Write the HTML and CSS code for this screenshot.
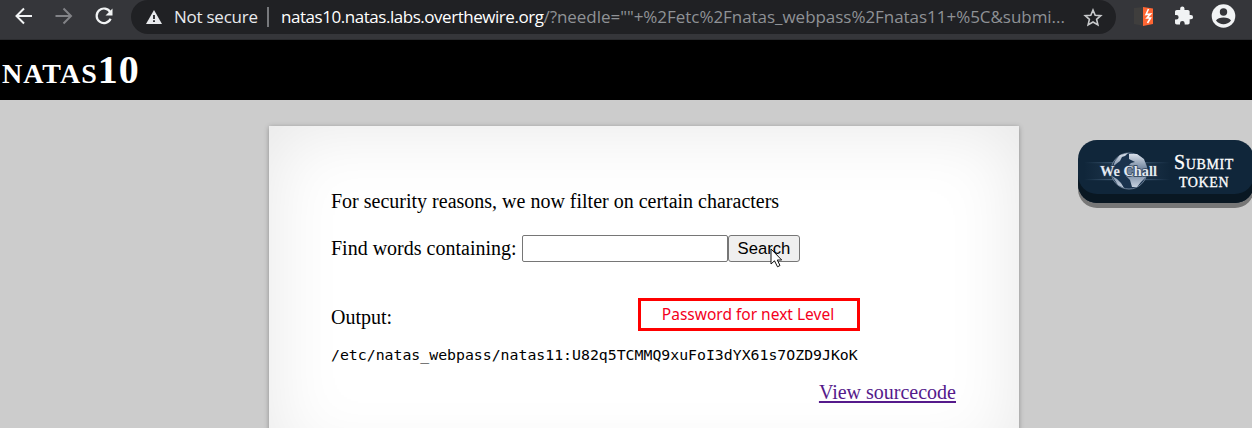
FILE: index.html
```html
<!DOCTYPE html>
<html lang="en">
<head>
<meta charset="utf-8">
<title>natas10</title>
<link rel="stylesheet" href="styles.css">
</head>
<body>
<header class="toolbar">
  <svg class="nav-icons" width="131" height="40" viewBox="0 0 131 40" fill="none" stroke-width="2">
    <path d="M32 16H17M24 8.500L16.500 16L24 23.500" stroke="#f1f3f4"/>
    <path d="M55.500 16H71M63.500 8.500L71 16L63.500 23.500" stroke="#828387"/>
    <path d="M110.300 12.200A7.300 7.300 0 1 0 110.600 18.800" stroke="#f1f3f4" stroke-width="2.200"/>
    <path d="M112.500 8.500V15.500H105.500Z" fill="#f1f3f4"/>
  </svg>
  <div class="omnibox">
    <svg class="warning" width="16" height="14" viewBox="0 0 16 14"><path d="M8 0L16 14H0Z" fill="#e8eaed"/><path d="M8 5V9M8 10.300V12" stroke="#202124" stroke-width="1.800"/></svg>
    <span class="security">Not secure</span>
    <span class="divider"></span>
    <span class="url"><span class="host">natas10.natas.labs.overthewire.org</span><span class="query">/?needle=""+%2Fetc%2Fnatas_webpass%2Fnatas11+%5C&amp;submi...</span></span>
    <svg class="star" width="20" height="19" viewBox="0 0 20 19"><path d="M10 2L12.200 7.200L17.800 7.700L13.600 11.400L14.900 16.900L10 14L5.100 16.900L6.400 11.400L2.200 7.700L7.800 7.200Z" fill="none" stroke="#c8cacc" stroke-width="1.600"/></svg>
  </div>
  <svg class="extensions" width="136" height="40" viewBox="0 0 136 40">
    <path d="M18 8L28 7V26L18 24Z" fill="#3f3e3d"/>
    <path d="M27 7L37 8.500V24L27 26Z" fill="#ff6633"/>
    <path d="M32.500 9L30 14.500L34.500 14L31 18L34.500 18L31.500 23" fill="none" stroke="#fff" stroke-width="1.600"/>
    <path transform="translate(57.300 5.600) scale(.86)" d="M20.500 11H19V7c0-1.100-.9-2-2-2h-4V3.500a2.500 2.500 0 0 0-5 0V5H4c-1.100 0-2 .9-2 2v3.800h1.500a2.700 2.700 0 0 1 0 5.400H2V20c0 1.100.9 2 2 2h3.800v-1.500a2.700 2.700 0 0 1 5.400 0V22H17c1.100 0 2-.9 2-2v-4h1.500a2.500 2.500 0 0 0 0-5z" fill="#f1f3f4"/>
    <circle cx="107.500" cy="16" r="11.800" fill="#f1f3f4"/>
    <circle cx="107.500" cy="12" r="3.700" fill="#35363a"/>
    <path d="M100 20.500C102 16.400 113 16.400 115 20.500C111 25.500 104 25.500 100 20.500Z" fill="#35363a"/>
  </svg>
</header>
<h1 class="title">natas10</h1>
<main class="page">
  <section class="content">
    <p class="notice">For security reasons, we now filter on certain characters</p>
    <form class="search">
      <label for="needle">Find words containing:</label>
      <input class="needle" id="needle" type="text"><button class="submit" type="button">Search</button>
      <svg class="pointer" width="13" height="20" viewBox="0 0 13 20"><path d="M1 1V16L4.500 12.800L7.500 18.800L10 17.500L7.300 12H11.700Z" fill="#fff" stroke="#111" stroke-width="1"/></svg>
    </form>
    <p class="output-label">Output:</p>
    <pre class="output">/etc/natas_webpass/natas11:U82q5TCMMQ9xuFoI3dYX61s7OZD9JKoK</pre>
    <div class="source"><a href="#">View sourcecode</a></div>
    <div class="callout">Password for next Level</div>
  </section>
  <aside class="wechall">
    <svg class="logo" width="86" height="46" viewBox="0 0 86 46">
      <defs>
        <linearGradient id="beam"><stop offset="0" stop-color="#6c90b5" stop-opacity="0"/><stop offset=".5" stop-color="#7f9dbb"/><stop offset="1" stop-color="#6c90b5" stop-opacity="0"/></linearGradient>
        <linearGradient id="land" x2="0" y2="1"><stop stop-color="#d8dfe9"/><stop offset=".5" stop-color="#667b96"/><stop offset="1" stop-color="#c5d0de"/></linearGradient>
      </defs>
      <rect y="14" width="86" height="17" fill="url(#beam)" opacity=".16"/>
      <rect y="13" width="86" height="1.200" fill="url(#beam)" opacity=".6"/>
      <rect y="30" width="86" height="1.200" fill="url(#beam)" opacity=".6"/>
      <circle cx="45" cy="22" r="18" fill="#1a334e" stroke="#8496ac" stroke-width=".8"/>
      <path d="M31 12L36 6L44 4L41 7L38 8L36 12L32 15L29 18ZM28 27L33 30L37 34L40 39L34 36Z" fill="url(#land)"/>
      <path d="M45 5L53 5L60 10L63 19L62 28L57 33L53 38L48 38L46 31L42 27L42 19L47 14L51 13L45 10Z" fill="url(#land)"/>
      <text class="logo-text" x="16" y="26.500" textLength="57" lengthAdjust="spacingAndGlyphs">We Chall</text>
    </svg>
    <span class="token">Submit<br>token</span>
  </aside>
</main>
</body>
</html>
```
FILE: styles.css
```css
* { box-sizing: border-box; }
body {
  margin: 0;
  height: 428px;
  overflow: hidden;
  background: #ccc;
  color: #000;
  font: 20px/23px "Liberation Serif", serif;
}
.toolbar {
  display: flex;
  height: 40px;
  background: #35363a;
  border-bottom: 1px solid #2b2c2f;
}
svg { flex: none; }
.omnibox {
  display: flex;
  align-items: center;
  flex: none;
  width: 985px;
  height: 34px;
  padding: 0 13px 0 15px;
  border-radius: 17px;
  background: #202124;
  color: #e8eaed;
  font: 17px/34px "Open Sans", "Noto Sans", sans-serif;
  white-space: nowrap;
}
.warning { margin-right: 12px; }
.security { flex: none; width: 84px; letter-spacing: -0.25px; }
.divider { flex: none; width: 2px; height: 20px; margin: 0 12px 0 9px; background: #77797c; }
.url { flex: 1; min-width: 0; }
.host { color: #fff; letter-spacing: -0.46px; }
.query { color: #8f9296; letter-spacing: -0.04px; }
.title {
  height: 60px;
  margin: 0;
  padding: 6px 0 0 2px;
  background: #000;
  color: #fff;
  font-size: 40px;
  line-height: 48px;
  letter-spacing: 1px;
  font-variant: small-caps;
  text-transform: lowercase;
}
.page {
  display: flex;
  align-items: flex-start;
  height: 328px;
  padding: 26px 0 0 269px;
  overflow: hidden;
}
.content {
  position: relative;
  flex: none;
  width: 750px;
  height: 341px;
  padding: 64px 63px 0 62px;
  background: #fff;
  box-shadow: 0 1px 5px rgba(0, 0, 0, .3), inset 0 0 75px rgba(0, 0, 0, .1);
}
.notice { margin: 0 0 22px; }
.search { position: relative; display: flex; height: 27px; }
.search label { width: 191px; line-height: 26px; }
.needle {
  width: 206px;
  height: 27px;
  margin: 0;
  border: 1px solid #767676;
  border-radius: 2px;
}
.submit {
  width: 72px;
  height: 27px;
  padding: 0;
  border: 1px solid #767676;
  border-radius: 3px;
  background: #efefef;
  color: #000;
  font: 16.67px "Liberation Sans", sans-serif;
}
.pointer { position: absolute; left: 439px; top: 13px; }
.output-label { margin: 44px 0 16px; }
.output {
  margin: 0;
  font: 14.84px/20px "DejaVu Sans Mono", monospace;
}
.source { margin-top: 16px; text-align: right; }
.source a { color: #551a8b; text-decoration-thickness: 2px; text-underline-offset: 2px; }
.callout {
  position: absolute;
  left: 369px;
  top: 172px;
  width: 222px;
  height: 33px;
  padding-right: 2px;
  border: 3px solid #f00;
  color: #f4001c;
  font: 15.5px/27px "Noto Sans", sans-serif;
  text-align: center;
}
.wechall {
  display: flex;
  flex: none;
  width: 176px;
  height: 63px;
  margin: 14px 0 0 59px;
  padding: 9px 0 0 6px;
  border-radius: 19px;
  background: #10263a;
  box-shadow: inset 0 -9px 0 #091722, 0 5px 0 #777;
}
.logo-text {
  font: bold 15px "Liberation Serif", serif;
  fill: #e3e9f1;
  stroke: #2a3e56;
  stroke-width: 1.4px;
  paint-order: stroke;
}
.token {
  width: 68px;
  padding-top: 4px;
  color: #fff;
  text-align: center;
  font-size: 20px;
  line-height: 18px;
  letter-spacing: 0.6px;
  font-variant: small-caps;
  -webkit-text-stroke: 0.3px #fff;
}
```
